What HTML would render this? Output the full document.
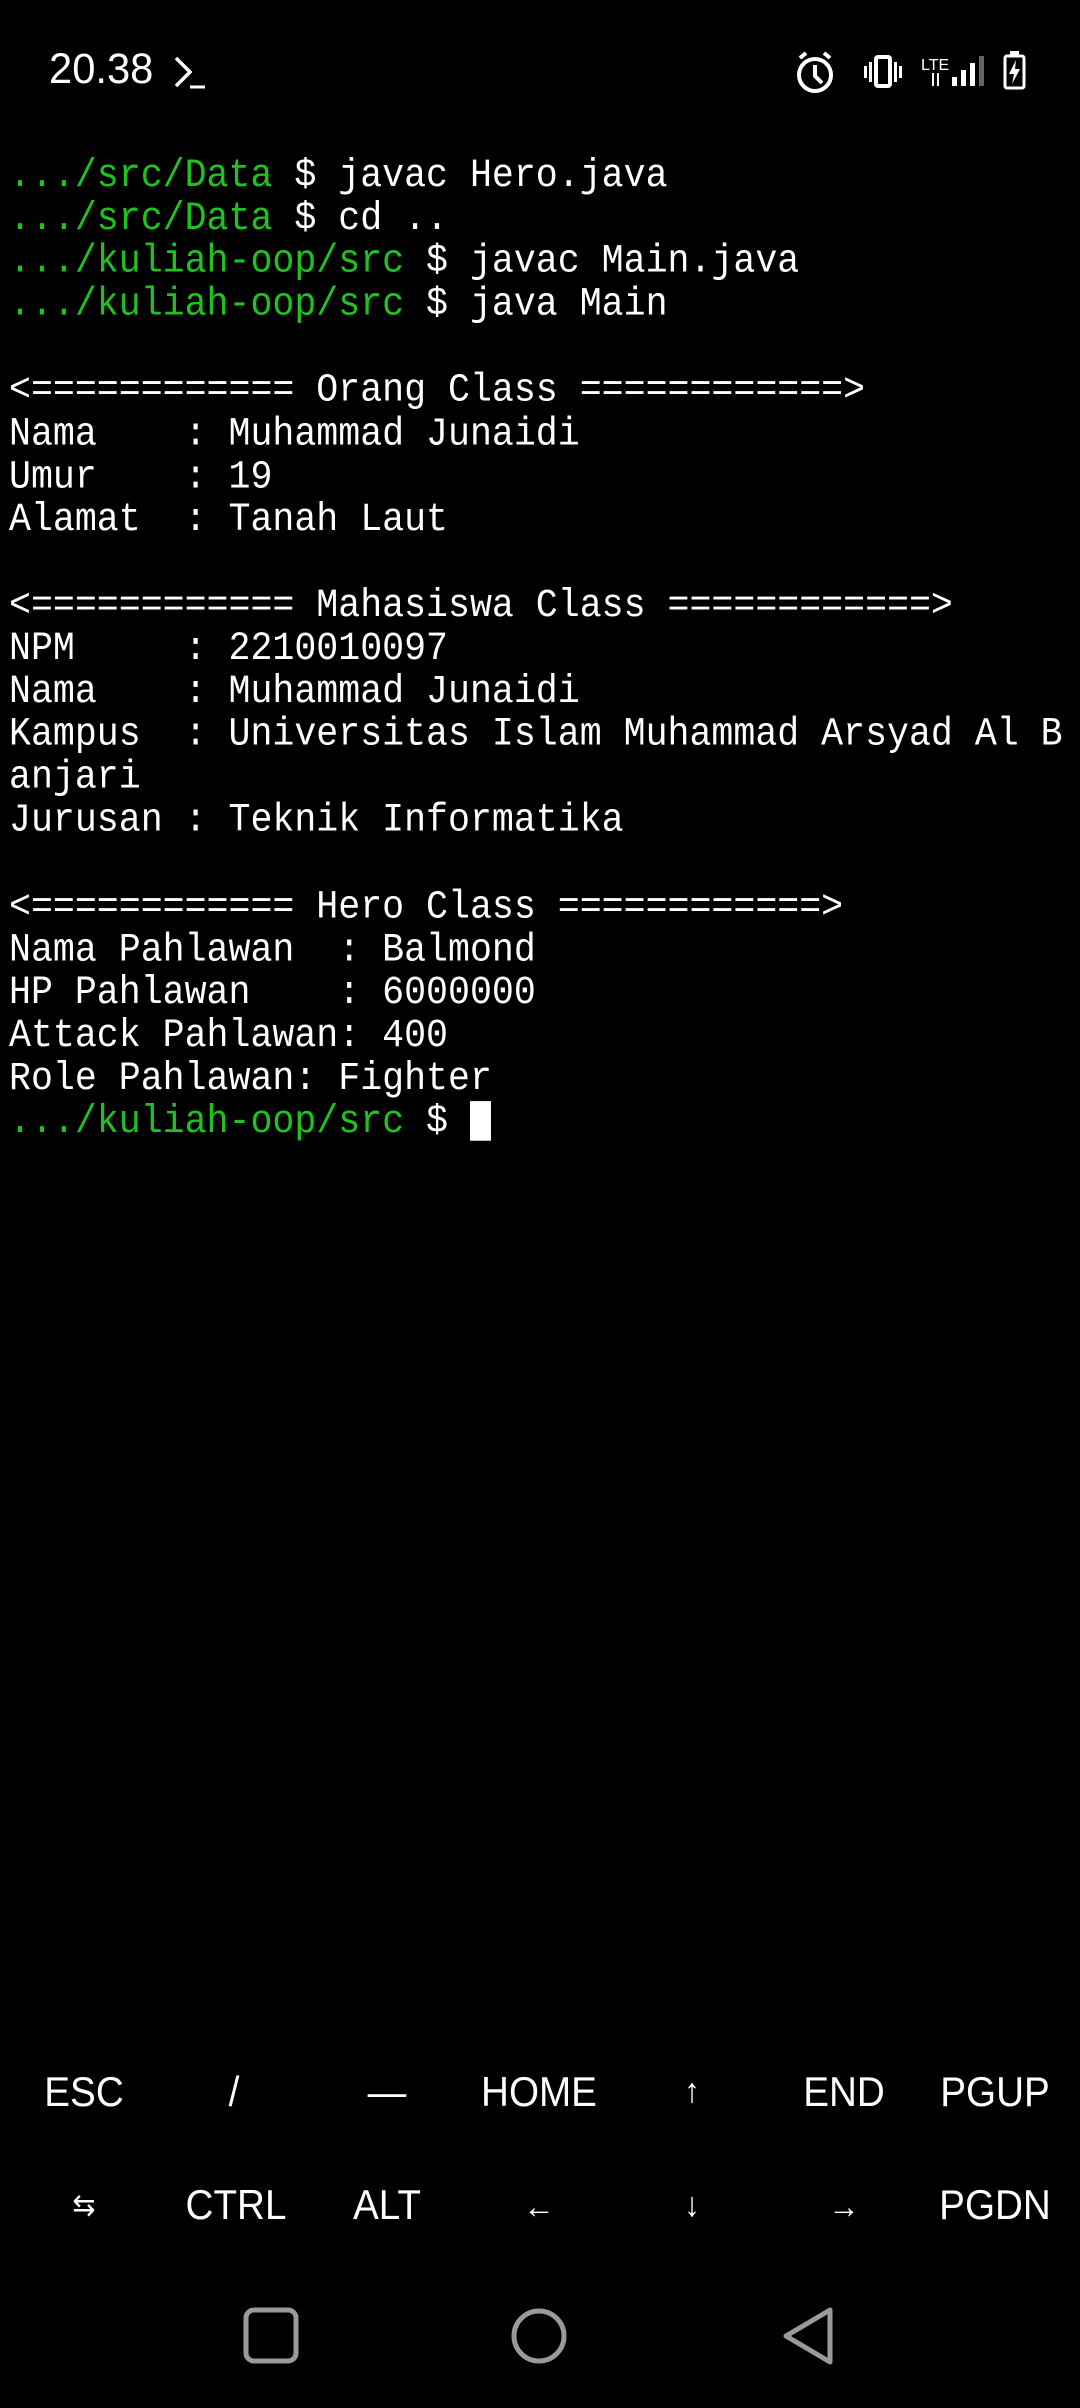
<!DOCTYPE html>
<html><head><meta charset="utf-8"><style>
html,body{margin:0;padding:0;background:#000;width:1080px;height:2408px;overflow:hidden;position:relative}
.term{position:absolute;left:9px;top:154px;font-family:"Liberation Mono","DejaVu Sans Mono",monospace;font-size:36.6px;line-height:39.09px;color:#fff;white-space:pre;transform:scaleY(1.1);transform-origin:0 0}
.g{color:#1fc21f}
.cur{display:inline-block;width:21px;height:36px;background:#fff;vertical-align:-8px}
.time{position:absolute;left:49px;top:45px;font-family:"Liberation Sans",sans-serif;font-size:43px;color:#fff;transform:scaleX(0.97);transform-origin:left}
.k{position:absolute;width:154px;text-align:center;font-family:"Liberation Sans",sans-serif;font-size:42px;color:#fff;transform:translateX(-77px) scaleX(0.92)}
.a{font-size:34px}
</style></head><body>
<div class="time">20.38</div>
<svg style="position:absolute;left:0;top:0" width="1080" height="120">
<polyline points="176,58 190,72 176,86" fill="none" stroke="#fff" stroke-width="3.5"/>
<line x1="190" y1="87" x2="205" y2="87" stroke="#fff" stroke-width="3"/>
<g fill="none" stroke="#fff" stroke-width="4">
<circle cx="815" cy="75" r="16"/>
<polyline points="815,65 815,76 822,83"/>
<line x1="800" y1="58" x2="806" y2="53"/><line x1="830" y1="58" x2="824" y2="53"/>
<rect x="876" y="57" width="14" height="29" rx="2"/>
</g>
<rect x="864" y="66" width="3" height="12" fill="#fff"/><rect x="869" y="62" width="3" height="20" fill="#fff"/>
<rect x="894" y="62" width="3" height="20" fill="#fff"/><rect x="899" y="66" width="3" height="12" fill="#fff"/>
<text x="921" y="70" font-family="Liberation Sans,sans-serif" font-size="16" fill="#fff">LTE</text>
<rect x="932" y="73" width="2" height="13" fill="#fff"/><rect x="937" y="73" width="2" height="13" fill="#fff"/>
<rect x="952" y="77" width="5" height="9" fill="#fff"/><rect x="961" y="70" width="5" height="16" fill="#fff"/><rect x="970" y="63" width="5" height="23" fill="#fff"/><rect x="979" y="56" width="5" height="30" fill="#666"/>
<rect x="1005" y="56" width="19" height="32" rx="2" fill="none" stroke="#fff" stroke-width="3"/>
<rect x="1010" y="51" width="9" height="5" fill="#fff"/>
<polygon points="1016,60 1009,74 1014,74 1012,84 1020,69 1015,69" fill="#fff"/>
</svg>
<div class="term"><span class="g">.../src/Data</span> $ javac Hero.java
<span class="g">.../src/Data</span> $ cd ..
<span class="g">.../kuliah-oop/src</span> $ javac Main.java
<span class="g">.../kuliah-oop/src</span> $ java Main

&lt;============ Orang Class ============&gt;
Nama    : Muhammad Junaidi
Umur    : 19
Alamat  : Tanah Laut

&lt;============ Mahasiswa Class ============&gt;
NPM     : 2210010097
Nama    : Muhammad Junaidi
Kampus  : Universitas Islam Muhammad Arsyad Al B
anjari
Jurusan : Teknik Informatika

&lt;============ Hero Class ============&gt;
Nama Pahlawan  : Balmond
HP Pahlawan    : 6000000
Attack Pahlawan: 400
Role Pahlawan: Fighter
<span class="g">.../kuliah-oop/src</span> $ <span class="cur"></span></div>

<div class="k" style="left:84px;top:2068px">ESC</div>
<div class="k" style="left:234px;top:2068px">/</div>
<div class="k" style="left:387px;top:2068px">—</div>
<div class="k" style="left:539px;top:2068px">HOME</div>
<div class="k a" style="left:692px;top:2072px">↑</div>
<div class="k" style="left:844px;top:2068px">END</div>
<div class="k" style="left:995px;top:2068px">PGUP</div>
<div class="k a" style="left:84px;top:2188px;font-size:30px">⇆</div>
<div class="k" style="left:236px;top:2181px">CTRL</div>
<div class="k" style="left:387px;top:2181px">ALT</div>
<div class="k a" style="left:539px;top:2188px">←</div>
<div class="k a" style="left:692px;top:2186px">↓</div>
<div class="k a" style="left:844px;top:2188px">→</div>
<div class="k" style="left:995px;top:2181px">PGDN</div>

<svg style="position:absolute;left:0;top:2290px" width="1080" height="100">
<g fill="none" stroke="#9a9a9a" stroke-width="5" stroke-linejoin="round">
<rect x="246" y="20" width="50" height="51" rx="8"/>
<circle cx="539" cy="46" r="25"/>
<path d="M830,20 L830,72 L786,46 Z"/>
</g>
</svg>
</body></html>
